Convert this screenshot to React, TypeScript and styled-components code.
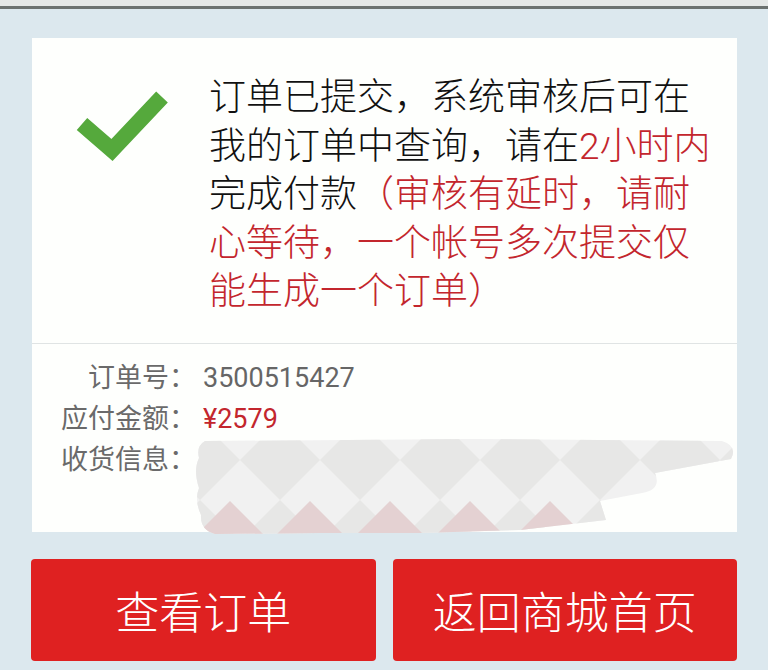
import React from "react";
import styled, { createGlobalStyle } from "styled-components";

const GlobalStyle = createGlobalStyle`
  html, body {
    margin: 0;
    padding: 0;
    background: #dce8ee;
  }
  body {
    width: 768px;
    height: 670px;
    overflow: hidden;
    font-family: "Noto Sans CJK SC", "Noto Sans", sans-serif;
  }
`;

const Page = styled.div`
  width: 768px;
  height: 670px;
  display: flex;
  flex-direction: column;
`;

const TopStrip = styled.div`
  height: 6px;
  background: #e5e8e7;
  border-bottom: 3px solid #6c7270;
`;

const Main = styled.main`
  padding: 29px 31px 0 31px;
  display: flex;
  flex-direction: column;
`;

const Card = styled.section`
  margin-left: 1px;
  width: 705px;
  background: #fefffd;
  display: flex;
  flex-direction: column;
`;

const Summary = styled.div`
  display: flex;
  align-items: flex-start;
  padding: 36px 0 28px 40px;
  height: 305px;
  box-sizing: border-box;
`;

const CheckIcon = styled.svg`
  flex: none;
  margin-top: 14px;
  width: 100px;
  height: 80px;
`;

const Message = styled.p`
  margin: 0 0 0 37px;
  font-family: "Roboto", "Noto Sans CJK SC", sans-serif;
  font-size: 37px;
  font-weight: 300;
  line-height: 48.5px;
  color: #111111;
  white-space: nowrap;
`;

const Warn = styled.span`
  color: #c3262d;
`;

const Divider = styled.hr`
  margin: 0;
  border: none;
  border-top: 1px solid #e0e4e4;
`;

const Details = styled.dl`
  position: relative;
  margin: 0;
  height: 188px;
  box-sizing: border-box;
  padding-top: 14px;
  display: grid;
  grid-template-columns: 164px 1fr;
  grid-auto-rows: 41px;
  column-gap: 7px;
  align-content: start;
  font-family: "Roboto", "Noto Sans CJK SC", sans-serif;
  font-size: 27px;
  line-height: 41px;
  color: #6a6a6a;
`;

const Label = styled.dt`
  text-align: right;
  white-space: nowrap;
`;

const Value = styled.dd<{ $accent?: boolean }>`
  margin: 0;
  color: ${(p) => (p.$accent ? "#c3262d" : "#666666")};
`;

const Redaction = styled.svg`
  position: absolute;
  left: 160px;
  top: 90px;
  width: 580px;
  height: 105px;
  pointer-events: none;
`;

const ButtonRow = styled.div`
  margin-top: 27px;
  display: grid;
  grid-template-columns: 1fr 1fr;
  column-gap: 17px;
`;

const ActionButton = styled.button`
  height: 102px;
  border: none;
  border-radius: 4px;
  background: #df2121;
  color: #ffffff;
  font-family: "Noto Sans CJK SC", sans-serif;
  font-size: 44px;
  font-weight: 300;
  padding: 0;
  cursor: pointer;
`;

const diamonds: string[] = [];
for (let cx = 200; cx <= 800; cx += 80) {
  for (let cy = 460; cy <= 620; cy += 80) {
    diamonds.push(`M ${cx} ${cy - 40} L ${cx + 40} ${cy} L ${cx} ${cy + 40} L ${cx - 40} ${cy} Z`);
  }
}
const pinks: string[] = [];
for (let px = 150; px <= 560; px += 80) {
  pinks.push(`M ${px} 501 L ${px + 40} 541 L ${px - 40} 541 Z`);
}

export default function App() {
  return (
    <Page>
      <GlobalStyle />
      <TopStrip />
      <Main>
        <Card>
          <Summary>
            <CheckIcon viewBox="72 88 100 80">
              <polyline
                points="82,124 112,150 162,97"
                fill="none"
                stroke="#55a93c"
                strokeWidth="16"
                strokeLinejoin="miter"
                strokeLinecap="butt"
              />
            </CheckIcon>
            <Message>
              订单已提交，系统审核后可在
              <br />
              我的订单中查询，请在<Warn>2小时内</Warn>
              <br />
              完成付款<Warn>（审核有延时，请耐</Warn>
              <br />
              <Warn>心等待，一个帐号多次提交仅</Warn>
              <br />
              <Warn>能生成一个订单）</Warn>
            </Message>
          </Summary>
          <Divider />
          <Details>
            <Label>订单号：</Label>
            <Value>3500515427</Value>
            <Label>应付金额：</Label>
            <Value $accent>¥2579</Value>
            <Label>收货信息：</Label>
            <Value />
            <Redaction viewBox="192 434 580 105">
              <defs>
                <clipPath id="blob">
                  <path d="M 205 441 L 470 439 L 722 441 Q 738 446 731 459 L 655 473 Q 662 490 642 493 L 600 501 L 606 520 L 520 530 L 420 533 L 320 533 L 215 534 Q 200 530 201 515 Q 194 500 199 488 Q 193 470 199 458 Q 196 446 205 441 Z" />
                </clipPath>
              </defs>
              <g clipPath="url(#blob)">
                <rect x="190" y="430" width="560" height="110" fill="#f1f1f1" />
                {diamonds.map((d, i) => (
                  <path key={i} d={d} fill="#e7e7e6" />
                ))}
                {pinks.map((d, i) => (
                  <path key={`p${i}`} d={d} fill="#e4d1d2" />
                ))}
              </g>
            </Redaction>
          </Details>
        </Card>
        <ButtonRow>
          <ActionButton type="button">查看订单</ActionButton>
          <ActionButton type="button">返回商城首页</ActionButton>
        </ButtonRow>
      </Main>
    </Page>
  );
}
